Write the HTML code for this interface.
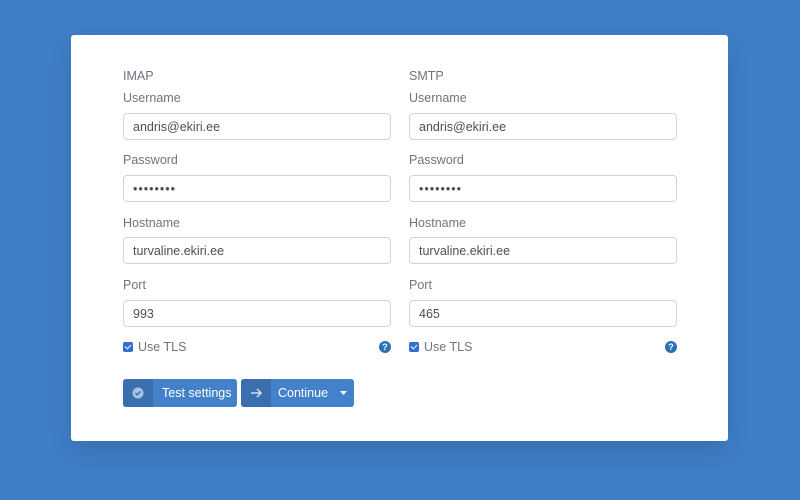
<!DOCTYPE html>
<html><head><style>
*{box-sizing:border-box;margin:0;padding:0}
body{width:800px;height:500px;background:#3f7fc9;font-family:"Liberation Sans",sans-serif;position:relative;overflow:hidden}
.card{position:absolute;left:71px;top:35px;width:657px;height:406px;background:#fff;border-radius:3px;box-shadow:0 10px 30px rgba(0,0,0,.15)}
.col{position:absolute;top:0;width:268px}
.t{position:absolute;font-size:12.5px;color:#6c757d}
.in{position:absolute;left:0;width:268px;height:27px;border:1px solid #ced4da;border-radius:4px;font-size:12.5px;color:#495057;padding:6px 9px;line-height:14px}
.cb{position:absolute;left:0;top:307px;width:10px;height:10px;background:#2f6fd0;border-radius:2px}
.cb:after{content:"";position:absolute;left:3px;top:1px;width:3px;height:5px;border:solid #fff;border-width:0 1.5px 1.5px 0;transform:rotate(45deg)}
.q{position:absolute;right:0;top:306px;width:12px;height:12px;border-radius:50%;background:#2f6fb5;color:#fff;font-size:9px;font-weight:bold;text-align:center;line-height:12px}
.btn{position:absolute;top:344px;height:28px;background:#4481cb;border-radius:3px;color:#fff;font-size:12.5px;line-height:28px;overflow:hidden}
.ic{position:absolute;left:0;top:0;width:30px;height:28px;background:#3a6eaf}
</style></head><body>
<div class="card">
<div class="col" style="left:52px">
<div class="t" style="top:34px">IMAP</div>
<div class="t" style="top:56px">Username</div>
<div class="in" style="top:78px">andris@ekiri.ee</div>
<div class="t" style="top:118px">Password</div>
<div class="in" style="top:140px;letter-spacing:1px">••••••••</div>
<div class="t" style="top:181px">Hostname</div>
<div class="in" style="top:202px">turvaline.ekiri.ee</div>
<div class="t" style="top:243px">Port</div>
<div class="in" style="top:265px">993</div>
<div class="cb"></div><div class="t" style="left:15px;top:305px">Use TLS</div>
<div class="q">?</div>
</div>
<div class="col" style="left:338px">
<div class="t" style="top:34px">SMTP</div>
<div class="t" style="top:56px">Username</div>
<div class="in" style="top:78px">andris@ekiri.ee</div>
<div class="t" style="top:118px">Password</div>
<div class="in" style="top:140px;letter-spacing:1px">••••••••</div>
<div class="t" style="top:181px">Hostname</div>
<div class="in" style="top:202px">turvaline.ekiri.ee</div>
<div class="t" style="top:243px">Port</div>
<div class="in" style="top:265px">465</div>
<div class="cb"></div><div class="t" style="left:15px;top:305px">Use TLS</div>
<div class="q">?</div>
</div>
<div class="btn" style="left:52px;width:114px"><div class="ic"><svg width="30" height="28"><circle cx="15" cy="14" r="5.5" fill="#a9c2e3"/><path d="M12.5 14l1.8 1.8 3.2-3.4" stroke="#3a6eaf" stroke-width="1.5" fill="none"/></svg></div><span style="position:absolute;left:39px">Test settings</span></div>
<div class="btn" style="left:170px;width:113px"><div class="ic"><svg width="30" height="28"><path d="M10 14h10M16 10l4 4-4 4" stroke="#cfe0f4" stroke-width="1.5" fill="none"/></svg></div><span style="position:absolute;left:37px">Continue</span><svg style="position:absolute;left:99px;top:12px" width="8" height="5"><path d="M0 0h7l-3.5 4z" fill="#fff"/></svg></div>
</div>
</body></html>
